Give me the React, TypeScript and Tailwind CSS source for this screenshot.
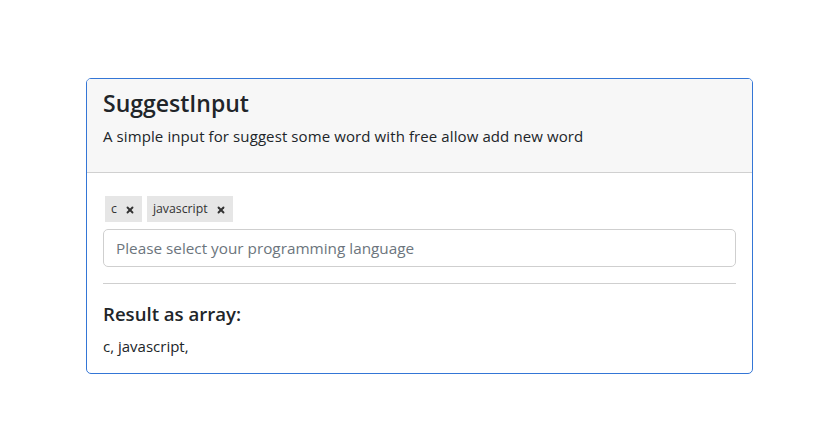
import { X } from "lucide-react";

const tags = ["c", "javascript"];

export default function App() {
  return (
    <div className="min-h-[441px] w-full bg-white pt-[78px] font-['Segoe_UI','Open_Sans',sans-serif] text-[#212529]">
      <div className="ml-[86px] w-[667px] overflow-hidden rounded-[5px] border border-[#3476d6]">
        <div className="h-[94px] border-b border-[#d0d0d0] bg-[#f7f7f7] px-4 pt-[10px]">
          <h1 className="text-[23px] font-semibold leading-[28px] tracking-[0px]">SuggestInput</h1>
          <p className="mt-[8px] text-[15px] leading-[22px] tracking-[0.1px]">
            A simple input for suggest some word with free allow add new word
          </p>
        </div>
        <div className="px-4 pt-[23px] pb-[16px]">
          <div className="flex gap-[5px] pl-[2px]">
            {tags.map((t) => (
              <span
                key={t}
                className="flex h-[26px] items-center gap-[8px] bg-[#e6e6e6] pl-[6px] pr-[7px] pt-[1px] text-[12.3px] text-[#333]"
              >
                {t}
                <X className="h-[10px] w-[10px]" strokeWidth={4.5} />
              </span>
            ))}
          </div>
          <input
            className="mt-[7px] h-[38px] w-full rounded-[5px] border border-[#cfcfcf] pl-[12px] pr-3 text-[15.3px] outline-none placeholder:text-[#6c757d]"
            placeholder="Please select your programming language"
          />
          <hr className="mt-4 border-t border-[#cfcfcf]" />
          <h2 className="mt-[17px] text-[18.6px] font-semibold leading-[26px]">Result as array:</h2>
          <p className="mt-[8px] text-[15px] leading-[22px]">c, javascript,</p>
        </div>
      </div>
    </div>
  );
}
